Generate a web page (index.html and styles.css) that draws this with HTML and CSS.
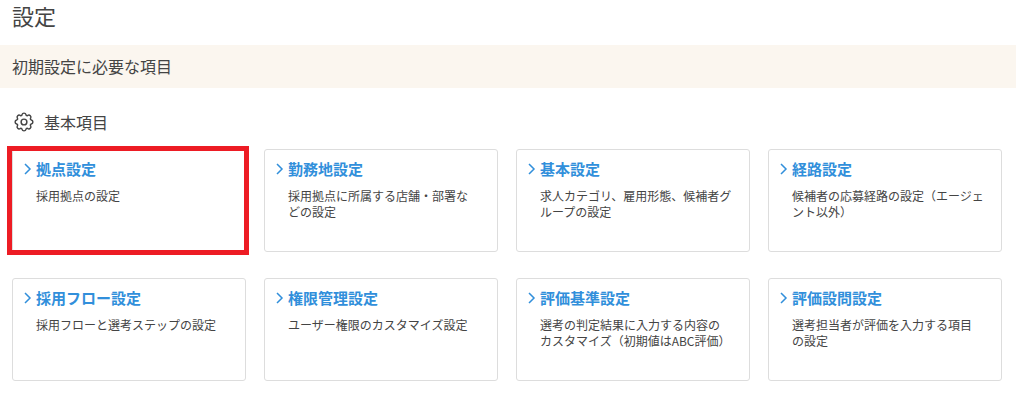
FILE: index.html
```html
<!DOCTYPE html>
<html lang="ja">
<head>
<meta charset="utf-8">
<meta name="viewport" content="width=device-width, initial-scale=1">
<title>設定</title>
<link rel="stylesheet" href="styles.css">
</head>
<body>
<main>
<h1 class="page-title">設定</h1>
<h2 class="band">初期設定に必要な項目</h2>
<section class="group">
<h3 class="group-title">
<svg class="gear" viewBox="-1 -1 18 18" aria-hidden="true"><path d="M9.796 1.343c-.527-1.79-3.065-1.79-3.592 0l-.094.319a.873.873 0 0 1-1.255.52l-.292-.16c-1.64-.892-3.433.902-2.54 2.541l.159.292a.873.873 0 0 1-.52 1.255l-.319.094c-1.79.527-1.79 3.065 0 3.592l.319.094a.873.873 0 0 1 .52 1.255l-.16.292c-.892 1.64.901 3.434 2.541 2.54l.292-.159a.873.873 0 0 1 1.255.52l.094.319c.527 1.79 3.065 1.79 3.592 0l.094-.319a.873.873 0 0 1 1.255-.52l.292.16c1.64.893 3.434-.902 2.54-2.541l-.159-.292a.873.873 0 0 1 .52-1.255l.319-.094c1.79-.527 1.79-3.065 0-3.592l-.319-.094a.873.873 0 0 1-.52-1.255l.16-.292c.893-1.64-.902-3.433-2.541-2.54l-.292.159a.873.873 0 0 1-1.255-.52z"/><circle cx="8" cy="8" r="2.600"/></svg>
基本項目</h3>
<ul class="cards">
<li class="card card-marked"><a class="card-link" href="#"><svg class="chevron" viewBox="0 0 8 12" aria-hidden="true"><path d="M1 1l5 5-5 5"/></svg>拠点設定</a><p class="card-text">採用拠点の設定</p></li>
<li class="card"><a class="card-link" href="#"><svg class="chevron" viewBox="0 0 8 12" aria-hidden="true"><path d="M1 1l5 5-5 5"/></svg>勤務地設定</a><p class="card-text">採用拠点に所属する店舗・部署な<br>どの設定</p></li>
<li class="card"><a class="card-link" href="#"><svg class="chevron" viewBox="0 0 8 12" aria-hidden="true"><path d="M1 1l5 5-5 5"/></svg>基本設定</a><p class="card-text">求人カテゴリ、雇用形態、候補者グループの設定</p></li>
<li class="card"><a class="card-link" href="#"><svg class="chevron" viewBox="0 0 8 12" aria-hidden="true"><path d="M1 1l5 5-5 5"/></svg>経路設定</a><p class="card-text">候補者の応募経路の設定（エージェント以外）</p></li>
<li class="card"><a class="card-link" href="#"><svg class="chevron" viewBox="0 0 8 12" aria-hidden="true"><path d="M1 1l5 5-5 5"/></svg>採用フロー設定</a><p class="card-text">採用フローと選考ステップの設定</p></li>
<li class="card"><a class="card-link" href="#"><svg class="chevron" viewBox="0 0 8 12" aria-hidden="true"><path d="M1 1l5 5-5 5"/></svg>権限管理設定</a><p class="card-text">ユーザー権限のカスタマイズ設定</p></li>
<li class="card"><a class="card-link" href="#"><svg class="chevron" viewBox="0 0 8 12" aria-hidden="true"><path d="M1 1l5 5-5 5"/></svg>評価基準設定</a><p class="card-text">選考の判定結果に入力する内容の<br>カスタマイズ（初期値はABC評価）</p></li>
<li class="card"><a class="card-link" href="#"><svg class="chevron" viewBox="0 0 8 12" aria-hidden="true"><path d="M1 1l5 5-5 5"/></svg>評価設問設定</a><p class="card-text">選考担当者が評価を入力する項目<br>の設定</p></li>
</ul>
</section>
</main>
</body>
</html>
```
FILE: styles.css
```css
* { box-sizing: border-box; }
body { margin: 0; background: #fff; color: #444; font-family: "Noto Sans CJK JP", sans-serif; }
h1, h2, h3, p, ul { margin: 0; padding: 0; font-weight: 400; }
.page-title { padding: 0 12px 15px; font-size: 22px; line-height: 30px; }
.band { padding: 10px 12px; background: #fbf6ef; font-size: 16px; line-height: 23px; }
.group { padding: 22px 14px 24px 12px; }
.group-title { display: flex; align-items: center; gap: 10px; padding-left: 2px; font-size: 16px; line-height: 24px; }
.gear { width: 20px; height: 20px; fill: none; stroke: #444; stroke-width: 1.3; }
.cards { display: grid; grid-template-columns: repeat(4, 1fr); gap: 26px 18px; margin-top: 15px; list-style: none; }
.card { position: relative; min-height: 103px; padding: 8px 11px; border: 1px solid #ddd; border-radius: 3px; }
.card-marked::after { content: ""; position: absolute; inset: -4px -4px -4px -6px; border: 5px solid #ed1c24; pointer-events: none; }
.card-link { display: flex; align-items: center; gap: 4px; color: #318fdb; font-size: 15px; font-weight: 700; line-height: 22px; text-decoration: none; }
.chevron { width: 8px; height: 12px; fill: none; stroke: currentColor; stroke-width: 1.5; }
.card-text { margin-top: 8px; padding: 0 4px 0 12px; font-size: 12px; line-height: 16px; }
```
